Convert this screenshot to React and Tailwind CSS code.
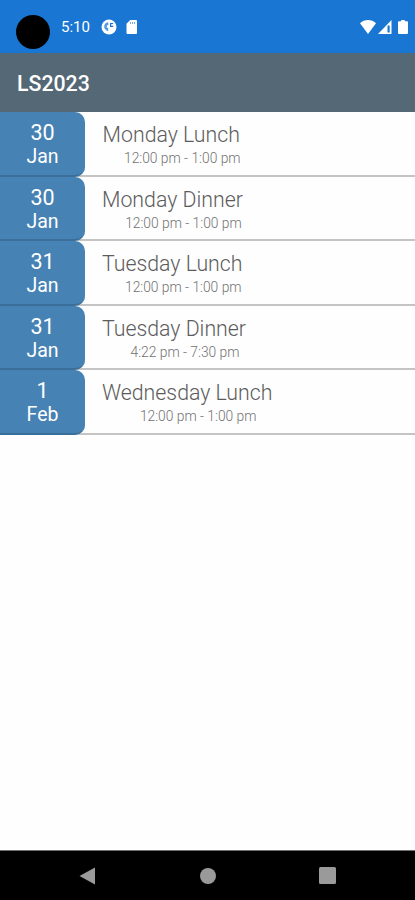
import React from "react";

const events = [
  { id: 1, day: "30", month: "Jan", title: "Monday Lunch", time: "12:00 pm - 1:00 pm" },
  { id: 2, day: "30", month: "Jan", title: "Monday Dinner", time: "12:00 pm - 1:00 pm" },
  { id: 3, day: "31", month: "Jan", title: "Tuesday Lunch", time: "12:00 pm - 1:00 pm" },
  { id: 4, day: "31", month: "Jan", title: "Tuesday Dinner", time: "4:22 pm - 7:30 pm" },
  { id: 5, day: "1", month: "Feb", title: "Wednesday Lunch", time: "12:00 pm - 1:00 pm" },
];

const StatusBar = () => (
  <div className="flex h-[53px] shrink-0 items-start bg-[#1976d2] text-white">
    <div className="ml-4 mt-[15px] h-[34px] w-[34px] rounded-full bg-black" />
    <span className="ml-[11px] mt-[17px] w-[30px] whitespace-nowrap text-[15px] leading-5">
      5:10
    </span>
    <svg className="ml-[10px] mt-[19px] h-4 w-4" viewBox="0 0 16 16">
      <circle cx="8" cy="8" r="7.5" fill="white" />
      <path
        d="M7.300 3.300C4.500 3.500 3 5.500 3.200 8c.2 2 1.800 3.600 4 4.200V8.800H5.800V6.200h1.500z"
        fill="#1976d2"
        fillOpacity="0.75"
      />
      <path d="M9 4h3.200v4H9z" fill="#1976d2" />
      <path d="M10.200 5h2.500v1.700h-2.500z" fill="white" />
    </svg>
    <svg className="ml-[9px] mt-5 h-[14px] w-3" viewBox="0 0 12 14">
      <path
        d="M4.200 0H10a1 1 0 0 1 1 1v12a1 1 0 0 1-1 1H1.500a1 1 0 0 1-1-1V3.800z"
        fill="white"
      />
      <path d="M4.500 2v2M6.500 2v2M8.500 2v2" stroke="#1976d2" strokeWidth="0.6" />
    </svg>
    <div className="ml-auto mr-[7px] mt-5 flex">
      <svg className="h-[14px] w-4" viewBox="0 0 16 14">
        <path d="M0 3.200C4.500-1 11.500-1 16 3.200L8 14z" fill="white" />
      </svg>
      <svg className="ml-[2px] h-[14px] w-[14px]" viewBox="0 0 14 14">
        <path d="M13.500 0v14H0z" fill="white" />
        <path d="M9.500 5.500h2.200v7H9.500z" fill="#1976d2" />
      </svg>
      <svg className="ml-[6px] h-[14px] w-[10px]" viewBox="0 0 10 14">
        <path
          d="M3.200 0h3.600v1.300H9a1 1 0 0 1 1 1V13a1 1 0 0 1-1 1H1a1 1 0 0 1-1-1V2.300a1 1 0 0 1 1-1h2.200z"
          fill="white"
        />
      </svg>
    </div>
  </div>
);

const EventRow = ({ event }) => (
  <li className="flex h-[64.6px] border-b-2 border-[#c4c4c4]">
    <div className="-mb-[2px] flex w-[85px] flex-col items-center rounded-r-[10px] border-b-2 border-[#396f9a] bg-[#4682b4] pt-[9px] text-white">
      <span className="text-[21.500px] leading-6">{event.day}</span>
      <span className="text-[19.500px] leading-6">{event.month}</span>
    </div>
    <div className="ml-[17px] flex flex-col items-center pt-[10px]">
      <span className="text-[21.300px] font-light leading-[26px] text-[#5c5c5c]">
        {event.title}
      </span>
      <span className="pl-[22px] text-[13.800px] font-light leading-5 text-[#727272]">
        {event.time}
      </span>
    </div>
  </li>
);

const NavigationBar = () => (
  <div className="flex h-[50px] shrink-0 items-center border-t border-[#707070] bg-black pl-[79px]">
    <svg className="h-[18px] w-[17px]" viewBox="0 0 17 18">
      <path d="M16 .5v17L.5 9z" fill="#9a9a9a" />
    </svg>
    <div className="ml-[104px] h-4 w-4 rounded-full bg-[#9a9a9a]" />
    <div className="ml-[103px] h-[17px] w-[17px] rounded-[1.500px] bg-[#9a9a9a]" />
  </div>
);

const App = () => {
  return (
    <div className="flex h-[900px] w-full flex-col overflow-hidden bg-[#fefefe] font-[Roboto,sans-serif]">
      <StatusBar />
      <header className="flex h-[59px] shrink-0 items-center bg-[#546876] pl-[17px] pt-[3px]">
        <h1 className="text-[21.300px] font-medium leading-7 text-white">LS2023</h1>
      </header>
      <ul className="grow">
        {events.map((event) => (
          <EventRow key={event.id} event={event} />
        ))}
      </ul>
      <NavigationBar />
    </div>
  );
};

export default App;
